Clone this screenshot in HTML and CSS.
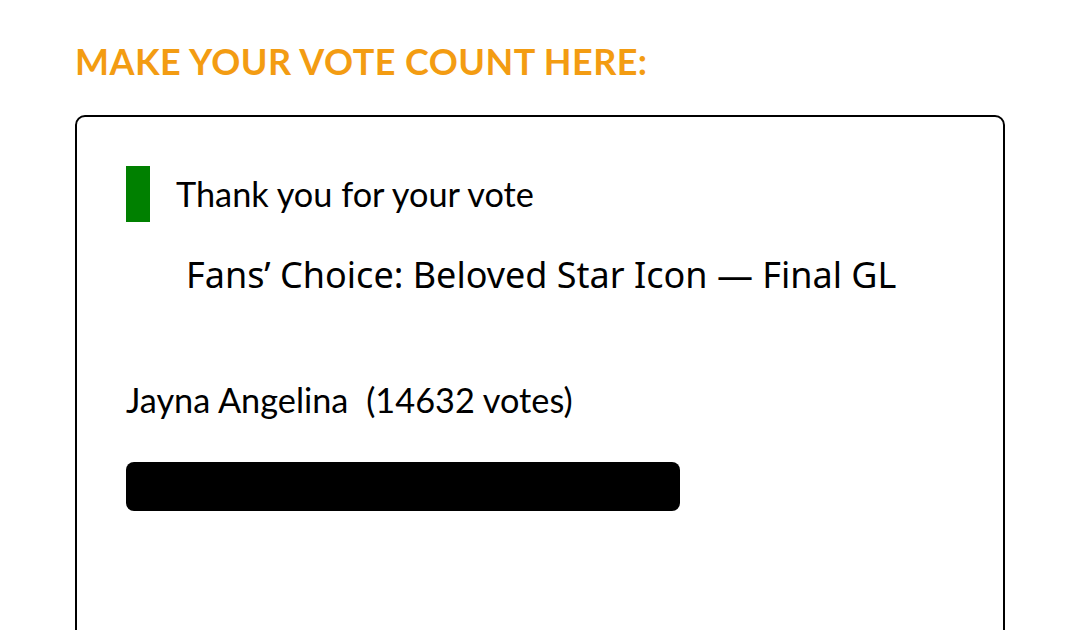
FILE: index.html
```html
<!DOCTYPE html>
<html>
<head>
<meta charset="utf-8">
<link rel="stylesheet" href="styles.css">
</head>
<body>
<div class="page">
  <h2 class="title">MAKE YOUR VOTE COUNT HERE:</h2>
  <div class="card">
    <div class="notice">
      <span class="notice-bar"></span>
      <span class="notice-text">Thank you for your vote</span>
    </div>
    <div class="poll-title">Fans’ Choice: Beloved Star Icon — Final GL</div>
    <div class="result">
      <div class="result-label"><span class="name">Jayna Angelina</span> <span class="count">(14632 votes)</span></div>
      <div class="result-track"><div class="result-fill" style="width: 100%"></div></div>
    </div>
  </div>
</div>
</body>
</html>
```

FILE: styles.css
```css
html, body {
  margin: 0;
  padding: 0;
  background: #ffffff;
}
body {
  font-family: Lato, "Liberation Sans", sans-serif;
  color: #000;
  overflow: hidden;
  height: 630px;
}
.page {
  padding: 39px 75px 0 75px;
}
.title {
  margin: 0;
  font-family: Lato, sans-serif;
  font-weight: 700;
  font-size: 36px;
  line-height: 44px;
  letter-spacing: 0.45px;
  color: #f39c12;
}
.card {
  margin-top: 32px;
  border: 2px solid #000;
  border-radius: 10px;
  height: 560px;
  box-sizing: border-box;
  padding: 49px 49px 0 49px;
}
.notice {
  display: flex;
  align-items: center;
  gap: 26px;
}
.notice-bar {
  width: 24px;
  height: 56px;
  background: #008000;
}
.notice-text {
  font-size: 34.3px;
  line-height: 40px;
}
.poll-title {
  margin: 28px 0 0 60px;
  font-family: "Noto Sans", sans-serif;
  font-size: 36px;
  line-height: 50px;
}
.result {
  margin-top: 80px;
}
.result-label {
  font-size: 34.3px;
  line-height: 40px;
}
.count {
  margin-left: 9px;
}
.result-track {
  margin-top: 42px;
  width: 554px;
}
.result-fill {
  height: 49px;
  background: #000;
  border-radius: 8px;
}
```
